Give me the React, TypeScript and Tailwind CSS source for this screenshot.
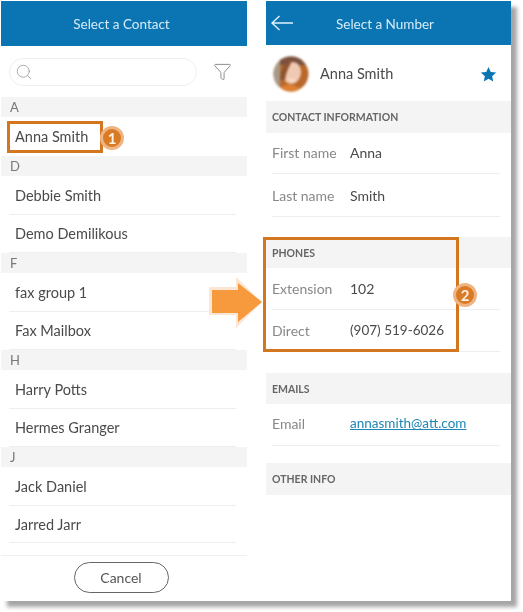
import { Search, Filter } from "lucide-react";

const Head = ({ children }: { children: string }) => (
  <div className="h-5 bg-[#f4f4f4] pl-[9px] text-[13px] leading-5 text-[#777]">{children}</div>
);
const Row = ({ children, h = "h-[38px]", cls = "" }: { children: string; h?: string; cls?: string }) => (
  <div className={`${h} flex items-center`}>
    <div className={`${cls} mx-[8px] flex h-full w-[227px] items-center border-b border-[#eeeeee] pl-[6px] text-[14.5px] text-[#4a4a4a]`}>
      {children}
    </div>
  </div>
);
const Band = ({ children, h }: { children: string; h: string }) => (
  <div className={`${h} flex items-center bg-[#f4f4f4] pl-[6px] pt-[2px] text-[10.5px] font-bold text-[#666]`}>{children}</div>
);
const Field = ({ label, value, h, link, cls = "", valueCls = "text-[#4a4a4a]" }: { label: string; value: string; h: string; link?: boolean; cls?: string; valueCls?: string }) => (
  <div className={`${h} ${cls} ml-[6px] mr-[11px] flex items-center border-b border-[#eeeeee] text-[14px]`}>
    <span className="w-[78px] text-[#888]">{label}</span>
    {link ? (
      <span className="text-[13.5px] text-[#1f86b5] underline">{value}</span>
    ) : (
      <span className={valueCls}>{value}</span>
    )}
  </div>
);
const Badge = ({ n, cls }: { n: string; cls: string }) => (
  <div
    className={`absolute flex h-[24px] w-[24px] items-center justify-center rounded-full border-[3px] border-[#efb483] bg-[#d97a24] text-[15px] font-bold leading-none text-[#fdf0e4] ${cls}`}
  >
    {n}
  </div>
);

export default function App() {
  return (
    <div className="relative h-[612px] w-[523px] bg-white font-['Lato',sans-serif] blur-[0.3px]">
      <div className="relative left-px top-px flex h-[600px] w-[510px] justify-between bg-white shadow-[6px_6px_4px_#a6a6a6]">
        <div className="flex w-[246px] flex-col">
          <div className="flex h-[45px] items-center justify-center bg-[#0b74b3] pr-[5px] pt-[2px] text-[13.5px] text-[#d5ecf7]">
            Select a Contact
          </div>
          <div className="flex h-[51px] items-center pl-[8px] pr-[15px]">
            <div className="flex h-[28px] w-[188px] items-center rounded-full border border-[#efefef] pl-[5px]">
              <Search className="h-[18px] w-[18px] text-[#aaaaaa]" strokeWidth={1.3} />
            </div>
            <Filter className="ml-auto h-[19px] w-[19px] text-[#888]" strokeWidth={1.2} />
          </div>
          <Head>A</Head>
          <div className="h-[39px]" />
          <Head>D</Head>
          <Row h="h-[39px]" cls="pt-[2px]">Debbie Smith</Row>
          <Row>Demo Demilikous</Row>
          <Head>F</Head>
          <Row h="h-[39px]" cls="pt-[2px]">fax group 1</Row>
          <Row>Fax Mailbox</Row>
          <Head>H</Head>
          <Row h="h-[39px]" cls="pt-[2px]">Harry Potts</Row>
          <Row>Hermes Granger</Row>
          <Head>J</Head>
          <Row h="h-[39px]" cls="pt-[2px]">Jack Daniel</Row>
          <Row h="h-[37px]" cls="pt-[2px]">Jarred Jarr</Row>
          <div className="mt-[12px] flex flex-1 items-start justify-center border-t border-[#f0f0f0] pt-[6px]">
            <div className="mr-[6px] flex h-[31px] w-[95px] items-center justify-center rounded-full border border-[#666] text-[14px] text-[#555]">
              Cancel
            </div>
          </div>
        </div>

        <div className="flex w-[245px] flex-col">
          <div className="relative flex h-[44px] items-center justify-center bg-[#0b74b3] pr-[7px] pt-[2px] text-[13.5px] text-[#d5ecf7]">
            <svg className="absolute left-[4px] top-[13px]" width="24" height="18" viewBox="0 0 24 18" fill="none" stroke="#dff1fa" strokeWidth="1.4">
              <path d="M23 9H2M9.5 2 2 9l7.5 7" />
            </svg>
            <span>Select a Number</span>
          </div>
          <div className="flex h-[56px] items-center pl-[7px] pt-[2px]">
            <svg width="36" height="36" viewBox="0 0 36 36" className="shrink-0 blur-[1px]">
              <defs>
                <clipPath id="av">
                  <circle cx="18" cy="18" r="17.5" />
                </clipPath>
              </defs>
              <g clipPath="url(#av)">
                <rect width="36" height="36" fill="#b9682c" />
                <rect width="36" height="9" fill="#7a5240" />
                <rect width="7" height="36" fill="#a89a8a" />
                <ellipse cx="19" cy="17" rx="9" ry="11" transform="rotate(12 19 17)" fill="#f0c9b2" />
                <path d="M7 24C7 14 11 7 19 5c-3 6-6 11-7 19z" fill="#8f5530" />
                <path d="M15 22c3 2 6 2 8 1-1 3-6 3-8-1z" fill="#fbeee6" />
                <path d="M5 36c2-6 8-8 14-7 5 1 8 3 10 7z" fill="#dd8032" />
              </g>
            </svg>
            <span className="ml-[11px] text-[14.5px] text-[#4a4a4a]">Anna Smith</span>
            <svg className="ml-auto mr-[14px]" width="17" height="17" viewBox="0 0 24 24" fill="#0b74b3">
              <path d="M12 1.500l3.200 7 7.600.8-5.700 5.100 1.600 7.500L12 18.100l-6.700 3.800 1.600-7.500L1.200 9.300l7.600-.8z" />
            </svg>
          </div>
          <Band h="h-[32px]">CONTACT INFORMATION</Band>
          <Field label="First name" value="Anna" h="h-[41px]" cls="pb-[2px]" />
          <Field label="Last name" value="Smith" h="h-[43px]" />
          <div className="h-[20px]" />
          <Band h="h-[31px]">PHONES</Band>
          <Field label="Extension" value="102" h="h-[42px]" cls="pb-[1px]" />
          <Field label="Direct" value="(907) 519-6026" h="h-[42px]" valueCls="text-[13.5px] text-[#4a4a4a]" />
          <div className="h-[21px]" />
          <Band h="h-[31px]">EMAILS</Band>
          <Field label="Email" value="annasmith@att.com" h="h-[42px]" cls="pb-[2px]" link />
          <div className="h-[17px]" />
          <Band h="h-[32px]">OTHER INFO</Band>
        </div>
      </div>

      <div className="absolute left-[7px] top-[121px] flex h-[32px] w-[96px] items-center border-[3px] border-[#d3761f] pl-[5px] text-[14.5px] text-[#4a4a4a]">
        Anna Smith
      </div>
      <Badge n="1" cls="left-[100px] top-[126px]" />
      <div className="absolute left-[263px] top-[237px] h-[115px] w-[196px] border-[3px] border-[#d3761f]" />
      <Badge n="2" cls="left-[453px] top-[283px]" />
      <svg className="absolute left-[208px] top-[275px]" width="56" height="56" viewBox="0 0 56 56">
        <path d="M1 12h27V2l26 25-26 26V40H1z" fill="#fbe6d4" />
        <path d="M4 15h26V8l24 19-24 20v-9H4z" fill="#f79a3e" />
      </svg>
    </div>
  );
}
